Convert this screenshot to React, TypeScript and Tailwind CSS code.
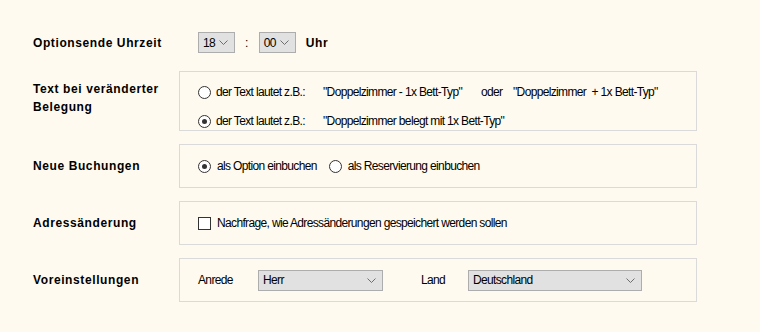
import type { ReactNode } from 'react';

const FONT = "font-['Liberation_Sans',Arial,sans-serif]";

function Chevron() {
  return (
    <svg width="9" height="5" viewBox="0 0 9 5" className="shrink-0">
      <path d="M0.5 0.5 L4.5 4.5 L8.5 0.5" fill="none" stroke="#6e6e6e" strokeWidth="1" />
    </svg>
  );
}

function Select({ value, className }: { value: string; className: string }) {
  return (
    <div
      className={`flex items-center justify-between h-[21px] border border-[#adadad] bg-[#e1e1e1] pl-[4px] pr-[6px] text-[12px] text-black ${className}`}
    >
      <span className="leading-none">{value}</span>
      <Chevron />
    </div>
  );
}

function Radio({ checked }: { checked?: boolean }) {
  return (
    <span className="flex items-center justify-center w-[13px] h-[13px] rounded-full border border-[#333] bg-white shrink-0">
      {checked && <span className="w-[5px] h-[5px] rounded-full bg-[#333]" />}
    </span>
  );
}

function Checkbox() {
  return <span className="w-[13px] h-[13px] border border-[#333] bg-white shrink-0" />;
}

function Label({ children, className = '' }: { children: ReactNode; className?: string }) {
  return (
    <div className={`w-[146px] shrink-0 text-[12px] font-bold tracking-[0.6px] leading-[18px] text-black ${className}`}>
      {children}
    </div>
  );
}

function Box({ children, className = '' }: { children: ReactNode; className?: string }) {
  return (
    <div className={`w-[518px] border border-[#dadada] pl-[18px] flex flex-col ${className}`}>
      {children}
    </div>
  );
}

export default function App() {
  return (
    <div className={`${FONT} min-h-[332px] w-[760px] bg-[#fffaef] pt-[32px] pl-[33px] text-[12px] text-black tracking-[-0.65px]`}>
      {/* Optionsende */}
      <div className="flex items-center h-[21px]">
        <Label>Optionsende Uhrzeit</Label>
        <div className="flex items-center pl-[19px]">
          <Select value="18" className="w-[37px]" />
          <span className="ml-[10px] mr-[11px]">:</span>
          <Select value="00" className="w-[37px]" />
          <span className="ml-[10px] font-bold tracking-[0.6px]">Uhr</span>
        </div>
      </div>

      {/* Text bei veränderter Belegung */}
      <div className="flex items-center mt-[18px]">
        <Label className="pb-[6px]">
          Text bei veränderter
          <br />
          Belegung
        </Label>
        <Box className="h-[60px] pt-[13px] gap-[15px]">
          <div className="flex items-center h-[14px]">
            <Radio />
            <span className="ml-[5px] w-[107px]">der Text lautet z.B.:</span>
            <span className="w-[158px]">"Doppelzimmer - 1x Bett-Typ"</span>
            <span className="w-[32px]">oder</span>
            <span>"Doppelzimmer&nbsp; + 1x Bett-Typ"</span>
          </div>
          <div className="flex items-center h-[14px]">
            <Radio checked />
            <span className="ml-[5px] w-[107px]">der Text lautet z.B.:</span>
            <span>"Doppelzimmer belegt mit 1x Bett-Typ"</span>
          </div>
        </Box>
      </div>

      {/* Neue Buchungen */}
      <div className="flex items-center mt-[13px]">
        <Label>Neue Buchungen</Label>
        <Box className="h-[44px] justify-center">
          <div className="flex items-center">
            <Radio checked />
            <span className="ml-[6px]">als Option einbuchen</span>
            <span className="ml-[12px]">
              <Radio />
            </span>
            <span className="ml-[6px]">als Reservierung einbuchen</span>
          </div>
        </Box>
      </div>

      {/* Adressänderung */}
      <div className="flex items-center mt-[13px]">
        <Label>Adressänderung</Label>
        <Box className="h-[44px] justify-center">
          <div className="flex items-center">
            <Checkbox />
            <span className="ml-[6px]">Nachfrage, wie Adressänderungen gespeichert werden sollen</span>
          </div>
        </Box>
      </div>

      {/* Voreinstellungen */}
      <div className="flex items-center mt-[13px]">
        <Label>Voreinstellungen</Label>
        <Box className="h-[44px] justify-center">
          <div className="flex items-center">
            <span className="w-[60px]">Anrede</span>
            <Select value="Herr" className="w-[125px]" />
            <span className="ml-[38px] w-[47px]">Land</span>
            <Select value="Deutschland" className="w-[174px]" />
          </div>
        </Box>
      </div>
    </div>
  );
}
